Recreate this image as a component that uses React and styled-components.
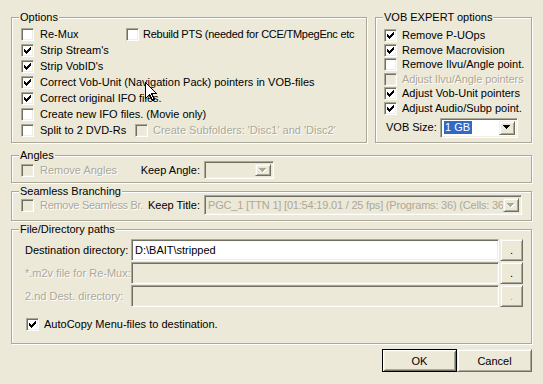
import React from 'react';
import styled, { createGlobalStyle, css } from 'styled-components';

const FACE = '#ece9d8';
const LIGHT = '#f1efe2';
const SHADOW = '#aca899';
const DARK = '#716f64';

const Global = createGlobalStyle`
  html, body { margin: 0; padding: 0; background: ${FACE}; }
  body {
    font-family: "Liberation Sans", Arial, sans-serif;
    font-size: 11px;
    color: #000;
  }
  * { box-sizing: border-box; }
`;

const Dialog = styled.div`
  position: relative;
  width: 543px;
  height: 384px;
  overflow: hidden;
  background: ${FACE};
  padding: 17px 0 0 11px;
  display: flex;
  flex-direction: column;
`;

const TopRow = styled.div`
  display: flex;
  gap: 8px;
`;

const Group = styled.div`
  position: relative;
  flex: none;
  width: ${(p) => p.$w}px;
  height: ${(p) => p.$h}px;
  margin-top: ${(p) => p.$mt || 0}px;
  border: 1px solid ${SHADOW};
  box-shadow: inset 1px 1px 0 #fff, 1px 1px 0 #fff;
  padding: ${(p) => p.$pad};
`;

const GroupTitle = styled.span`
  position: absolute;
  top: -7px;
  left: 7px;
  padding: 0 1px;
  line-height: 13px;
  background: ${FACE};
  white-space: nowrap;
`;

const Clip = styled.div`
  width: 100%;
  height: 100%;
  overflow: hidden;
  display: flex;
  flex-direction: column;
  gap: ${(p) => p.$gap || 0}px;
`;

const Row = styled.div`
  display: flex;
  align-items: ${(p) => p.$align || 'center'};
  height: ${(p) => p.$h}px;
  flex: none;
  margin-top: ${(p) => p.$mt || 0}px;
  padding-left: ${(p) => p.$pl || 0}px;
`;

const Item = styled.label`
  display: flex;
  align-items: center;
  flex: none;
  gap: ${(p) => p.$gap ?? 6}px;
  width: ${(p) => (p.$w ? `${p.$w}px` : 'auto')};
  margin-left: ${(p) => p.$ml || 0}px;
  white-space: nowrap;
  line-height: 13px;
  letter-spacing: ${(p) => p.$ls || 0}px;
  color: ${(p) => (p.$disabled ? SHADOW : '#000')};
  text-shadow: ${(p) => (p.$disabled ? '1px 1px 0 #fff' : 'none')};
`;

const Box = styled.span`
  flex: none;
  width: 13px;
  height: 13px;
  display: flex;
  align-items: center;
  justify-content: center;
  border: 1px solid;
  border-color: ${SHADOW} #fff #fff ${SHADOW};
  box-shadow: inset 1px 1px 0 ${DARK}, inset -1px -1px 0 ${LIGHT};
  background: ${(p) => (p.$disabled ? FACE : '#fff')};
`;

const Label = styled.span`
  flex: none;
  width: ${(p) => (p.$w ? `${p.$w}px` : 'auto')};
  text-align: ${(p) => (p.$right ? 'right' : 'left')};
  white-space: nowrap;
  line-height: 13px;
  color: ${(p) => (p.$disabled ? SHADOW : '#000')};
  text-shadow: ${(p) => (p.$disabled ? '1px 1px 0 #fff' : 'none')};
`;

const sunken = css`
  border: 1px solid;
  border-color: ${SHADOW} #fff #fff ${SHADOW};
  box-shadow: inset 1px 1px 0 ${DARK}, inset -1px -1px 0 ${LIGHT};
`;

const raised = css`
  border: 1px solid;
  border-color: ${LIGHT} ${DARK} ${DARK} ${LIGHT};
  box-shadow: inset 1px 1px 0 #fff, inset -1px -1px 0 ${SHADOW};
`;

const Combo = styled.div`
  ${sunken};
  flex: none;
  display: flex;
  align-items: stretch;
  width: ${(p) => p.$w}px;
  height: ${(p) => p.$h}px;
  margin-left: ${(p) => p.$ml || 0}px;
  padding: 2px;
  background: ${(p) => (p.$disabled ? FACE : '#fff')};
`;

const ComboText = styled.span`
  flex: 1;
  min-width: 0;
  overflow: hidden;
  white-space: nowrap;
  display: flex;
  align-items: center;
  padding-left: ${(p) => p.$pl ?? 1}px;
  letter-spacing: ${(p) => p.$ls || 0}px;
  color: ${(p) => (p.$disabled ? SHADOW : '#000')};
`;

const Selected = styled.span`
  background: #316ac5;
  color: #fff;
  line-height: 13px;
  padding: 0 2px 0 1px;
`;

const DropBtn = styled.span`
  ${raised};
  flex: none;
  width: 16px;
  background: ${FACE};
  display: flex;
  align-items: center;
  justify-content: center;
`;

const Field = styled.div`
  ${sunken};
  flex: none;
  width: ${(p) => p.$w}px;
  height: 22px;
  padding: 0 3px;
  display: flex;
  align-items: center;
  white-space: nowrap;
  overflow: hidden;
  background: ${(p) => (p.$disabled ? FACE : '#fff')};
`;

const SmallBtn = styled.span`
  ${raised};
  flex: none;
  width: 23px;
  height: 22px;
  margin-left: 1px;
  background: ${FACE};
  display: flex;
  align-items: center;
  justify-content: center;
  color: ${(p) => (p.$disabled ? SHADOW : '#000')};
  text-shadow: ${(p) => (p.$disabled ? '1px 1px 0 #fff' : 'none')};
  line-height: 13px;
`;

const ButtonRow = styled.div`
  display: flex;
  justify-content: flex-end;
  width: 521px;
  margin-top: 5px;
`;

const PushButton = styled.button`
  ${raised};
  width: 75px;
  height: 23px;
  padding: 0;
  font: inherit;
  color: #000;
  background: ${FACE};
  ${(p) =>
    p.$default &&
    css`
      border: 1px solid #000;
      box-shadow: inset 1px 1px 0 #fff, inset -1px -1px 0 ${DARK},
        inset 2px 2px 0 ${LIGHT}, inset -2px -2px 0 ${SHADOW};
    `}
`;

const Cursor = styled.svg`
  position: absolute;
  left: 145px;
  top: 82px;
`;

const CheckMark = () => (
  <svg width="7" height="7" viewBox="0 0 7 7" shapeRendering="crispEdges">
    <g fill="#000">
      <rect x="6" y="0" width="1" height="1" />
      <rect x="5" y="1" width="2" height="1" />
      <rect x="0" y="2" width="1" height="1" />
      <rect x="4" y="2" width="3" height="1" />
      <rect x="0" y="3" width="2" height="1" />
      <rect x="3" y="3" width="3" height="1" />
      <rect x="0" y="4" width="5" height="1" />
      <rect x="1" y="5" width="3" height="1" />
      <rect x="2" y="6" width="1" height="1" />
    </g>
  </svg>
);

const Arrow = ({ disabled }) => (
  <svg width="8" height="5" viewBox="0 0 8 5" shapeRendering="crispEdges">
    {disabled && (
      <g fill="#fff">
        <rect x="1" y="1" width="7" height="1" />
        <rect x="2" y="2" width="5" height="1" />
        <rect x="3" y="3" width="3" height="1" />
        <rect x="4" y="4" width="1" height="1" />
      </g>
    )}
    <g fill={disabled ? SHADOW : '#000'}>
      <rect x="0" y="0" width="7" height="1" />
      <rect x="1" y="1" width="5" height="1" />
      <rect x="2" y="2" width="3" height="1" />
      <rect x="3" y="3" width="1" height="1" />
    </g>
  </svg>
);

const Check = ({ checked, disabled, children, w, ml, gap, ls }) => (
  <Item $disabled={disabled} $w={w} $ml={ml} $gap={gap} $ls={ls}>
    <Box $disabled={disabled}>{checked && <CheckMark />}</Box>
    <span>{children}</span>
  </Item>
);

export default function App() {
  return (
    <>
      <Global />
      <Dialog>
        <TopRow>
          <Group $w={356} $h={126} $pad="9px 4px 0 9px">
            <GroupTitle>Options</GroupTitle>
            <Clip $gap={1}>
              <Row $h={15}>
                <Check w={105}>Re-Mux</Check>
                <Check gap={4} ls={-0.25}>Rebuild PTS (needed for CCE/TMpegEnc etc</Check>
              </Row>
              <Row $h={15}>
                <Check checked>Strip Stream's</Check>
              </Row>
              <Row $h={15}>
                <Check checked>Strip VobID's</Check>
              </Row>
              <Row $h={15}>
                <Check checked>Correct Vob-Unit (Navigation Pack) pointers in VOB-files</Check>
              </Row>
              <Row $h={15}>
                <Check checked>Correct original IFO files.</Check>
              </Row>
              <Row $h={15}>
                <Check>Create new IFO files. (Movie only)</Check>
              </Row>
              <Row $h={15}>
                <Check w={114}>Split to 2 DVD-Rs</Check>
                <Check disabled gap={5}>Create Subfolders: 'Disc1' and 'Disc2'</Check>
              </Row>
            </Clip>
          </Group>

          <Group $w={157} $h={126} $pad="11px 2px 0 8px">
            <GroupTitle>VOB EXPERT options</GroupTitle>
            <Clip>
              <Row $h={14.6} $align="flex-start">
                <Check checked gap={5}>Remove P-UOps</Check>
              </Row>
              <Row $h={14.6} $align="flex-start">
                <Check checked gap={5}>Remove Macrovision</Check>
              </Row>
              <Row $h={14.6} $align="flex-start">
                <Check gap={5}>Remove Ilvu/Angle point.</Check>
              </Row>
              <Row $h={14.6} $align="flex-start">
                <Check disabled gap={5} ls={-0.1}>Adjust Ilvu/Angle pointers</Check>
              </Row>
              <Row $h={14.6} $align="flex-start">
                <Check checked gap={5}>Adjust Vob-Unit pointers</Check>
              </Row>
              <Row $h={14.6} $align="flex-start">
                <Check checked gap={5}>Adjust Audio/Subp point.</Check>
              </Row>
              <Row $h={20} $mt={1.4} $pl={2}>
                <Label $w={54}>VOB Size:</Label>
                <Combo $w={78} $h={20}>
                  <ComboText $pl={1}>
                    <Selected>1 GB</Selected>
                  </ComboText>
                  <DropBtn>
                    <Arrow />
                  </DropBtn>
                </Combo>
              </Row>
            </Clip>
          </Group>
        </TopRow>

        <Group $w={521} $h={28} $mt={12} $pad="5px 0 0 9px">
          <GroupTitle>Angles</GroupTitle>
          <Row $h={18}>
            <Check disabled w={100}>Remove Angles</Check>
            <Label $w={79} $right>Keep Angle:</Label>
            <Combo $w={70} $h={18} $ml={4} $disabled>
              <ComboText $disabled />
              <DropBtn>
                <Arrow disabled />
              </DropBtn>
            </Combo>
          </Row>
        </Group>

        <Group $w={521} $h={30} $mt={8} $pad="3px 0 0 9px">
          <GroupTitle>Seamless Branching</GroupTitle>
          <Row $h={20}>
            <Check disabled w={100} ls={-0.3}>Remove Seamless Br.</Check>
            <Label $w={79} $right>Keep Title:</Label>
            <Combo $w={318} $h={20} $ml={4} $disabled>
              <ComboText $disabled $pl={1} $ls={-0.2}>
                PGC_1 [TTN 1] [01:54:19.01 / 25 fps] (Programs: 36) (Cells: 36
              </ComboText>
              <DropBtn>
                <Arrow disabled />
              </DropBtn>
            </Combo>
          </Row>
        </Group>

        <Group $w={521} $h={115} $mt={8} $pad="9px 0 0 13px">
          <GroupTitle>File/Directory paths</GroupTitle>
          <Clip $gap={1}>
            <Row $h={22}>
              <Label $w={106}>Destination directory:</Label>
              <Field $w={368}>D:\BAIT\stripped</Field>
              <SmallBtn>.</SmallBtn>
            </Row>
            <Row $h={22}>
              <Label $w={106} $disabled>*.m2v file for Re-Mux:</Label>
              <Field $w={368} $disabled />
              <SmallBtn>.</SmallBtn>
            </Row>
            <Row $h={22}>
              <Label $w={106} $disabled>2.nd Dest. directory:</Label>
              <Field $w={368} $disabled />
              <SmallBtn $disabled>.</SmallBtn>
            </Row>
            <Row $h={15} $mt={9}>
              <Check checked ml={1} gap={5}>AutoCopy Menu-files to destination.</Check>
            </Row>
          </Clip>
        </Group>

        <ButtonRow>
          <PushButton $default>OK</PushButton>
          <PushButton>Cancel</PushButton>
        </ButtonRow>

        <Cursor width="13" height="20" viewBox="0 0 13 20">
          <path
            d="M0.5 0.5 L0.5 16.5 L4.5 12.5 L7.5 18.5 L9.5 17.5 L6.5 11.5 L11.5 11.5 Z"
            fill="#fff"
            stroke="#000"
            strokeWidth="1"
            shapeRendering="crispEdges"
          />
        </Cursor>
      </Dialog>
    </>
  );
}
